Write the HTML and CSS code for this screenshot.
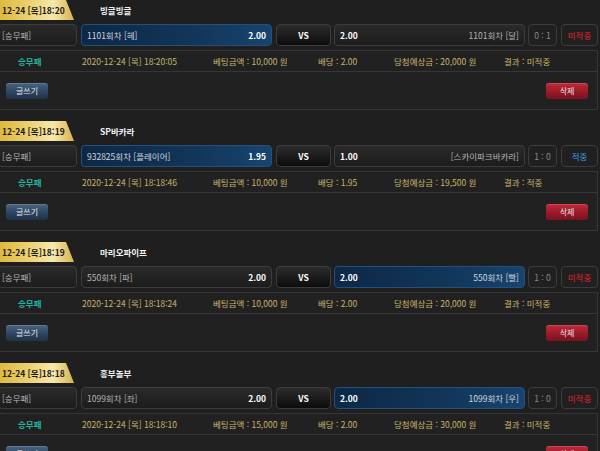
FILE: index.html
```html
<!DOCTYPE html>
<html lang="ko">
<head>
<meta charset="utf-8">
<title>베팅내역</title>
<link rel="stylesheet" href="styles.css">
</head>
<body>
<div class="list">

  <section class="bet">
    <div class="bet-head"><span class="badge">12-24 [목]18:20</span><span class="game">빙글빙글</span></div>
    <div class="pick-row">
      <div class="box type">[승무패]</div>
      <div class="box team sel"><span class="name">1101회차 [헤]</span><b class="odd">2.00</b></div>
      <div class="box vs">VS</div>
      <div class="box team"><b class="odd">2.00</b><span class="name">1101회차 [달]</span></div>
      <div class="box score">0 : 1</div>
      <div class="box result lose">미적중</div>
    </div>
    <div class="detail">
      <div class="info">
        <span class="kind">승무패</span>
        <span>2020-12-24 [목] 18:20:05</span>
        <span>베팅금액 : 10,000 원</span>
        <span>배당 : 2.00</span>
        <span>당첨예상금 : 20,000 원</span>
        <span>결과 : 미적중</span>
      </div>
      <div class="actions"><button class="btn write">글쓰기</button><button class="btn del">삭제</button></div>
    </div>
  </section>

  <section class="bet">
    <div class="bet-head"><span class="badge">12-24 [목]18:19</span><span class="game">SP바카라</span></div>
    <div class="pick-row">
      <div class="box type">[승무패]</div>
      <div class="box team sel"><span class="name">932825회차 [플레이어]</span><b class="odd">1.95</b></div>
      <div class="box vs">VS</div>
      <div class="box team"><b class="odd">1.00</b><span class="name">[스카이파크바카라]</span></div>
      <div class="box score">1 : 0</div>
      <div class="box result win">적중</div>
    </div>
    <div class="detail">
      <div class="info">
        <span class="kind">승무패</span>
        <span>2020-12-24 [목] 18:18:46</span>
        <span>베팅금액 : 10,000 원</span>
        <span>배당 : 1.95</span>
        <span>당첨예상금 : 19,500 원</span>
        <span>결과 : 적중</span>
      </div>
      <div class="actions"><button class="btn write">글쓰기</button><button class="btn del">삭제</button></div>
    </div>
  </section>

  <section class="bet">
    <div class="bet-head"><span class="badge">12-24 [목]18:19</span><span class="game">마리오파이프</span></div>
    <div class="pick-row">
      <div class="box type">[승무패]</div>
      <div class="box team"><span class="name">550회차 [파]</span><b class="odd">2.00</b></div>
      <div class="box vs">VS</div>
      <div class="box team sel"><b class="odd">2.00</b><span class="name">550회차 [빨]</span></div>
      <div class="box score">1 : 0</div>
      <div class="box result lose">미적중</div>
    </div>
    <div class="detail">
      <div class="info">
        <span class="kind">승무패</span>
        <span>2020-12-24 [목] 18:18:24</span>
        <span>베팅금액 : 10,000 원</span>
        <span>배당 : 2.00</span>
        <span>당첨예상금 : 20,000 원</span>
        <span>결과 : 미적중</span>
      </div>
      <div class="actions"><button class="btn write">글쓰기</button><button class="btn del">삭제</button></div>
    </div>
  </section>

  <section class="bet">
    <div class="bet-head"><span class="badge">12-24 [목]18:18</span><span class="game">흥부놀부</span></div>
    <div class="pick-row">
      <div class="box type">[승무패]</div>
      <div class="box team"><span class="name">1099회차 [좌]</span><b class="odd">2.00</b></div>
      <div class="box vs">VS</div>
      <div class="box team sel"><b class="odd">2.00</b><span class="name">1099회차 [우]</span></div>
      <div class="box score">1 : 0</div>
      <div class="box result lose">미적중</div>
    </div>
    <div class="detail">
      <div class="info">
        <span class="kind">승무패</span>
        <span>2020-12-24 [목] 18:18:10</span>
        <span>베팅금액 : 15,000 원</span>
        <span>배당 : 2.00</span>
        <span>당첨예상금 : 30,000 원</span>
        <span>결과 : 미적중</span>
      </div>
      <div class="actions"><button class="btn write">글쓰기</button><button class="btn del">삭제</button></div>
    </div>
  </section>

</div>
</body>
</html>
```

FILE: styles.css
```css
* { box-sizing: border-box; }

html, body {
  margin: 0;
  padding: 0;
  background: #1f1f1f;
  overflow: hidden;
}

body {
  font-family: "Noto Sans CJK KR", "Noto Sans", sans-serif;
  font-size: 8.5px;
  color: #c8c8c8;
}

.list {
  width: 600px;
}

.bet {
  margin-bottom: 11px;
}

.bet-head {
  display: flex;
  align-items: center;
  height: 20px;
  margin-bottom: 4px;
}

.badge {
  display: flex;
  align-items: center;
  width: 74px;
  height: 20px;
  padding-left: 2px;
  background: linear-gradient(90deg, #dfb93f 0%, #ecd172 40%, #f6e8ad 72%, #d6b24a 100%);
  clip-path: polygon(0 0, 66px 0, 74px 100%, 0 100%);
  color: #1b1b1b;
  font-weight: 700;
  font-size: 8.5px;
  white-space: nowrap;
}

.game {
  margin-left: 26px;
  color: #f0f0f0;
  font-weight: 700;
  font-size: 8.5px;
}

.pick-row {
  display: flex;
  height: 22px;
  margin-left: -2px;
  margin-bottom: 4px;
}

.box {
  display: flex;
  align-items: center;
  height: 22px;
  border: 1px solid #3c3c3c;
  border-radius: 4px;
  background: linear-gradient(180deg, #2a2a2a 0%, #1c1c1c 100%);
  white-space: nowrap;
}

.type {
  width: 79px;
  padding-left: 3px;
  color: #b8b8b8;
}

.team {
  width: 191px;
  margin-left: 4px;
  padding: 0 5px;
  justify-content: space-between;
}

.team .name { color: #b4b4b4; }
.team .odd { color: #ffffff; font-weight: 700; }

.team.sel {
  background: linear-gradient(90deg, #0d2847 0%, #123659 60%, #174470 100%);
  border-color: #24507c;
}
.team.sel .name { color: #d0d6de; }

.vs {
  width: 55px;
  margin-left: 4px;
  justify-content: center;
  background: linear-gradient(180deg, #2c2c2c 0%, #0c0c0c 100%);
  color: #ffffff;
  font-weight: 700;
}

.vs + .team { margin-left: 3px; }

.score {
  width: 29px;
  margin-left: 3px;
  justify-content: center;
  color: #8a8a8a;
  background: #202020;
}

.result {
  width: 37px;
  margin-left: 4px;
  justify-content: center;
  background: #202020;
}
.result.lose { color: #e3232a; }
.result.win { color: #3a9fe6; }

.detail {
  width: 599px;
  margin-left: -1px;
  border: 1px solid #363636;
  background: #212121;
}

.info {
  display: grid;
  grid-template-columns: 64px 131px 105px 76px 110px auto;
  align-items: center;
  height: 21px;
  padding-left: 18px;
  border-bottom: 1px solid #363636;
  color: #c9b46c;
  white-space: nowrap;
}

.info .kind {
  color: #21b3a2;
  font-weight: 700;
}

.actions {
  display: flex;
  align-items: center;
  justify-content: space-between;
  height: 37px;
  padding: 0 9px 0 6px;
}

.btn {
  height: 16px;
  border: 0;
  border-radius: 3px;
  padding: 0;
  font-family: inherit;
  font-size: 8px;
  color: #e4e4e4;
  cursor: pointer;
}

.btn.write {
  width: 42px;
  background: linear-gradient(180deg, #4a6483 0%, #2d4560 55%, #1f3247 100%);
  box-shadow: inset 0 1px 0 rgba(255,255,255,0.15);
}

.btn.del {
  width: 42px;
  background: linear-gradient(180deg, #c02a3a 0%, #9a1a28 55%, #7a1220 100%);
  box-shadow: inset 0 1px 0 rgba(255,255,255,0.15);
}
```
